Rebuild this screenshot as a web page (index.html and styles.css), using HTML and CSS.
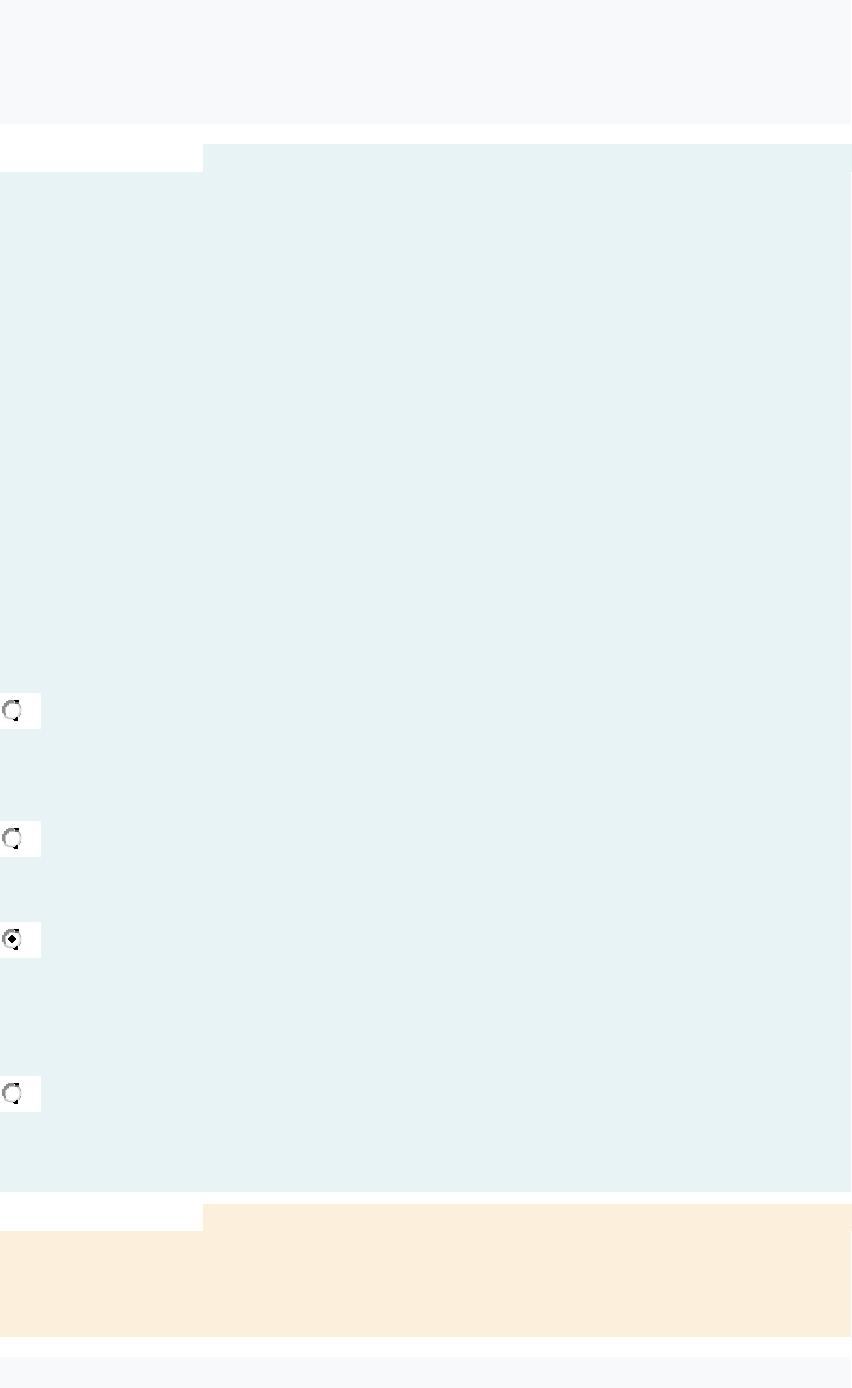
FILE: index.html
```html
<!DOCTYPE html>
<html lang="en">
<head>
    <meta charset="UTF-8">
    <meta name="viewport" content="width=device-width, initial-scale=1.0">
    <title>Quiz</title>
    <link rel="stylesheet" href="styles.css">
</head>
<body>
    <svg class="symbols" aria-hidden="true">
        <symbol id="radio" viewBox="0 0 24 24">
            <circle cx="12" cy="12" r="8.6" fill="none" stroke="#e0e0e0" stroke-width="2.4"/>
            <!-- stepped shadow on the upper left -->
            <path d="M8 2h6v3H9v2H7v2H5v6h1v2H4v-2H2V8h2V5h2V3h2z" fill="#8c8c8c"/>
            <path d="M9 5h6v1H9zM7 7h2v1H7zM5 9h1v6H5z" fill="#c4c4c4"/>
            <path d="M4 17h2v2h2v1h5v1H7v-1H5v-1H4z" fill="#c4c4c4"/>
            <path d="M15 4h4v2h-4z" fill="#666"/>
            <path d="M19 6h1v2h-1zM20 8h1v2h-1zM20 15h1v2h-1zM19 17h1v2h-1z" fill="#a8a8a8"/>
            <path d="M14 2h5v2h-4V3h-1zM13 21h2v-1h1v-1h2v4h-4v-1h-1z" fill="#000"/>
        </symbol>
    </svg>

    <div class="info"></div>

    <div class="question">
        <div class="question-top"></div>
        <div class="question-body">
            <div class="answer answer-a">
                <svg class="radio"><use href="#radio"/></svg>
            </div>
            <div class="answer answer-b">
                <svg class="radio"><use href="#radio"/></svg>
            </div>
            <div class="answer answer-c">
                <svg class="radio" viewBox="0 0 24 24">
                    <use href="#radio"/>
                    <path d="M11 8h2v1h1v1h1v1h1v2h-1v1h-1v1h-1v1h-2v-1h-1v-1H9v-1H8v-2h1v-1h1V9h1z" fill="#000"/>
                </svg>
            </div>
            <div class="answer answer-d">
                <svg class="radio"><use href="#radio"/></svg>
            </div>
        </div>
    </div>

    <div class="feedback">
        <div class="feedback-top"></div>
        <div class="feedback-body"></div>
    </div>

    <div class="info info-next"></div>
</body>
</html>
```
FILE: styles.css
```css
body {
    margin: 0;
    background-color: #fff;
    font-family: "Liberation Sans", Arial, sans-serif;
}
.symbols {
    display: none;
}
.info {
    height: 124px;
    margin-right: 1px;
    background-color: #f8f9fb;
}
.question {
    margin-top: 20px;
}
.question-top {
    height: 28px;
    margin-left: 203px;
    background-color: #e7f3f5;
}
.question-body {
    box-sizing: border-box;
    height: 1020px;
    margin-right: 1px;
    padding-top: 521px;
    background-color: #e7f3f5;
}
.answer {
    width: 41px;
    height: 36px;
    background-color: #fff;
}
.answer-a {
    margin-bottom: 92px;
}
.answer-b {
    margin-bottom: 65px;
}
.answer-c {
    margin-bottom: 118px;
}
.radio {
    display: block;
    width: 24px;
    height: 24px;
    padding-top: 5px;
}
.feedback {
    margin-top: 12px;
}
.feedback-top {
    height: 27px;
    margin-left: 203px;
    background-color: #fcefdc;
}
.feedback-body {
    height: 106px;
    margin-right: 1px;
    background-color: #fcefdc;
}
.info-next {
    height: 31px;
    margin-top: 20px;
}
```
